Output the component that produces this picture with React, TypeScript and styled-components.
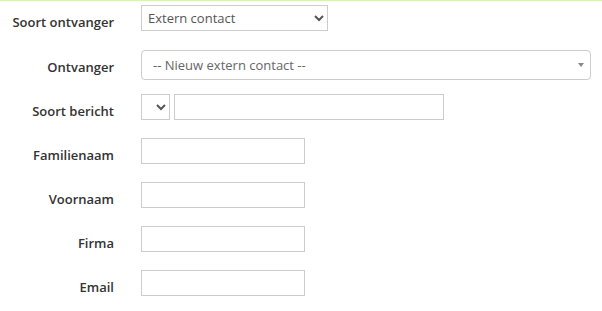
import React from "react";
import styled, { createGlobalStyle } from "styled-components";

const GlobalStyle = createGlobalStyle`
  html, body {
    margin: 0;
    padding: 0;
    background: #fff;
  }
  body {
    font-family: "Open Sans", "Liberation Sans", sans-serif;
    font-size: 13px;
    color: #333;
  }
`;

const Page = styled.div`
  border-top: 1px solid #d8f0c0;
  padding-top: 4px;
  width: 602px;
  box-sizing: border-box;
`;

const FormRow = styled.div<{ $gap: number }>`
  display: grid;
  grid-template-columns: 114px 1fr;
  column-gap: 27px;
  align-items: start;
  margin-bottom: ${(p) => p.$gap}px;
`;

const Label = styled.label`
  text-align: right;
  font-weight: 600;
  font-size: 13px;
  line-height: 18px;
  padding-top: 8px;
  color: #333;
  white-space: nowrap;
`;

const Controls = styled.div`
  display: flex;
  align-items: flex-start;
  gap: 4px;
`;

const NativeSelect = styled.select<{ $width: number }>`
  width: ${(p) => p.$width}px;
  height: 26px;
  box-sizing: border-box;
  border: 1px solid #ccc;
  border-radius: 0;
  background: #fff;
  color: #555;
  font-family: "Open Sans", "Liberation Sans", sans-serif;
  font-size: 13px;
  padding: 0 2px;
  outline: none;
`;

const ComboBox = styled.div`
  position: relative;
  width: 450px;
  height: 30px;
  box-sizing: border-box;
  border: 1px solid #ccc;
  border-radius: 4px;
  background: #fff;
  display: flex;
  align-items: center;
  padding-left: 11px;
  color: #666;
  font-size: 13px;
`;

const ComboArrow = styled.span`
  position: absolute;
  right: 6px;
  top: 12px;
  width: 0;
  height: 0;
  border-left: 3px solid transparent;
  border-right: 3px solid transparent;
  border-top: 4px solid #888;
`;

const TextInput = styled.input<{ $width: number }>`
  width: ${(p) => p.$width}px;
  height: 26px;
  box-sizing: border-box;
  border: 1px solid #ccc;
  border-radius: 0;
  background: #fff;
  padding: 0 6px;
  font-family: "Open Sans", "Liberation Sans", sans-serif;
  font-size: 13px;
  color: #555;
  outline: none;
`;

const contactFields = ["Familienaam", "Voornaam", "Firma", "Email"];

export default function App() {
  return (
    <>
      <GlobalStyle />
      <Page>
        <FormRow $gap={19}>
          <Label>Soort ontvanger</Label>
          <Controls>
            <NativeSelect $width={187} defaultValue="extern">
              <option value="extern">Extern contact</option>
              <option value="intern">Intern contact</option>
            </NativeSelect>
          </Controls>
        </FormRow>

        <FormRow $gap={14}>
          <Label>Ontvanger</Label>
          <Controls>
            <ComboBox>
              -- Nieuw extern contact --
              <ComboArrow />
            </ComboBox>
          </Controls>
        </FormRow>

        <FormRow $gap={18}>
          <Label>Soort bericht</Label>
          <Controls>
            <NativeSelect $width={29} defaultValue="">
              <option value=""></option>
            </NativeSelect>
            <TextInput $width={270} />
          </Controls>
        </FormRow>

        {contactFields.map((field) => (
          <FormRow key={field} $gap={18}>
            <Label>{field}</Label>
            <Controls>
              <TextInput $width={164} />
            </Controls>
          </FormRow>
        ))}
      </Page>
    </>
  );
}
